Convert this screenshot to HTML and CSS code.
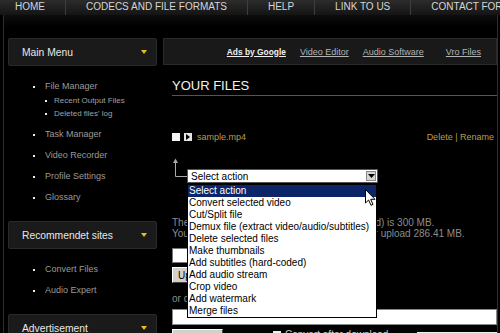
FILE: index.html
```html
<!DOCTYPE html>
<html>
<head>
<meta charset="utf-8">
<link rel="stylesheet" href="styles.css">
</head>
<body>
<div class="page">
  <nav class="topnav">
    <a class="nav-item first">Home</a>
    <a class="nav-item">Codecs and file formats</a>
    <a class="nav-item">Help</a>
    <a class="nav-item">Link to us</a>
    <a class="nav-item">Contact form</a>
  </nav>
  <div class="frame">
    <aside class="sidebar">
      <div class="side-box"><span>Main Menu</span><i class="tri"></i></div>
      <ul class="menu">
        <li>File Manager
          <ul class="sub">
            <li>Recent Output Files</li>
            <li>Deleted files' log</li>
          </ul>
        </li>
        <li>Task Manager</li>
        <li>Video Recorder</li>
        <li>Profile Settings</li>
        <li>Glossary</li>
      </ul>
      <div class="side-box"><span>Recommendet sites</span><i class="tri"></i></div>
      <ul class="menu">
        <li>Convert Files</li>
        <li>Audio Expert</li>
      </ul>
      <div class="side-box"><span>Advertisement</span><i class="tri"></i></div>
    </aside>
    <main class="main">
      <div class="adbar">
        <a class="ad ad-google">Ads by Google</a>
        <a class="ad">Video Editor</a>
        <a class="ad">Audio Software</a>
        <a class="ad ad-last">Vro Files</a>
      </div>
      <div class="content">
        <h1 class="title">YOUR FILES</h1>
        <div class="file-row">
          <span class="chk"></span>
          <span class="play"><svg width="6" height="6" viewBox="0 0 6 6"><path d="M1 0 L5 3 L1 6 Z" fill="#000"/></svg></span>
          <a class="fname">sample.mp4</a>
          <span class="file-actions">Delete | Rename</span>
        </div>
        <div class="actions">
          <svg class="arrow" width="15" height="19" viewBox="0 0 15 19">
            <path d="M3.5 3 V18.5 H15" fill="none" stroke="#aaa" stroke-width="1"/>
            <path d="M3.5 0.5 L1 5 H6 Z" fill="#aaa"/>
          </svg>
          <div class="select-wrap">
            <div class="select">
              <span>Select action</span>
              <span class="sel-btn"><svg width="7" height="4" viewBox="0 0 7 4"><path d="M0 0 H7 L3.5 4 Z" fill="#000"/></svg></span>
            </div>
            <ul class="dropdown">
              <li class="hl">Select action</li>
              <li>Convert selected video</li>
              <li>Cut/Split file</li>
              <li>Demux file (extract video/audio/subtitles)</li>
              <li>Delete selected files</li>
              <li>Make thumbnails</li>
              <li>Add subtitles (hard-coded)</li>
              <li>Add audio stream</li>
              <li>Crop video</li>
              <li>Add watermark</li>
              <li>Merge files</li>
            </ul>
            <svg class="cursor" width="11" height="17" viewBox="0 0 11 17">
              <path d="M0.5 0.5 V14 L3.6 11 L6 16.3 L8 15.4 L5.7 10.3 H10 Z" fill="#fff" stroke="#000" stroke-width="1" stroke-linejoin="round"/>
            </svg>
          </div>
        </div>
        <p class="info">The maximum size of all of your files (uploaded) is 300 MB.<br>You still have the space left in your account for upload 286.41 MB.</p>
        <div class="file-input"></div>
        <button class="btn">Upload</button>
        <p class="or">or download file from URL:</p>
        <div class="url-input"></div>
        <div class="bottom-row">
          <button class="btn">Download</button>
          <span class="chk2"></span>
          <span class="opt">Convert after download</span>
          <span class="small-input"></span>
        </div>
      </div>
    </main>
  </div>
</div>
</body>
</html>
```

FILE: styles.css
```css
html, body {
  margin: 0;
  padding: 0;
  background: #000;
  overflow: hidden;
  width: 500px;
  height: 333px;
}
.page {
  width: 500px;
  font-family: "Liberation Sans", Arial, sans-serif;
  color: #999;
}
.topnav {
  display: flex;
  height: 15px;
  background: linear-gradient(#2c2c2c, #141414);
  white-space: nowrap;
  overflow: hidden;
}
.nav-item {
  font-size: 10px;
  line-height: 14px;
  text-transform: uppercase;
  color: #d6d6d6;
  padding: 0 20px;
  border-left: 1px solid #3e3e3e;
}
.nav-item.first {
  padding-left: 15px;
  border-left: none;
}
.frame {
  margin-left: 3px;
  width: 489px;
  border-left: 1px solid #2e2e2e;
  border-right: 1px solid #2e2e2e;
  padding: 23px 0 0 4px;
  display: flex;
  gap: 6px;
  background: linear-gradient(#0d0d0d, #000 12px);
}
.sidebar {
  width: 149px;
  flex: none;
}
.side-box {
  height: 26px;
  background: #1a1a1a;
  border: 1px solid #2a2a2a;
  border-radius: 2px;
  display: flex;
  align-items: center;
  justify-content: space-between;
  padding: 0 9px 0 13px;
  font-size: 10.3px;
  color: #e8e8e8;
}
.tri {
  width: 0;
  height: 0;
  border-left: 3px solid transparent;
  border-right: 3px solid transparent;
  border-top: 4px solid #e6c01c;
}
.menu {
  list-style: none;
  margin: 0;
  padding: 10px 0 13px 37px;
}
.menu > li {
  position: relative;
  font-size: 9px;
  line-height: 21px;
  color: #9a9a9a;
}
.menu > li::before {
  content: "";
  position: absolute;
  left: -12px;
  top: 10px;
  width: 2px;
  height: 2px;
  background: #eee;
}
.sub {
  list-style: none;
  margin: -3px 0 4px 0;
  padding: 0 0 0 9px;
}
.sub li {
  position: relative;
  font-size: 8px;
  line-height: 13px;
  color: #a0a0a0;
}
.sub li::before {
  content: "";
  position: absolute;
  left: -9px;
  top: 6px;
  width: 2px;
  height: 2px;
  background: #eee;
}
.main {
  width: 334px;
  flex: none;
}
.adbar {
  height: 25px;
  background: #191919;
  border: 1px solid #2a2a2a;
  display: flex;
  align-items: center;
  justify-content: flex-end;
  padding-right: 15px;
}
.ad {
  font-size: 9px;
  color: #b4b4b4;
  text-decoration: underline;
  margin-left: 14px;
}
.ad-google {
  font-weight: bold;
  font-size: 8.4px;
  color: #f0f0f0;
}
.ad-last {
  margin-left: 22px;
}
.content {
  padding-left: 9px;
}
.title {
  margin: 13px 0 0 0;
  font-size: 13px;
  line-height: 15px;
  font-weight: normal;
  color: #f2f2f2;
  padding-bottom: 2px;
  border-bottom: 1px solid #555;
}
.file-row {
  margin-top: 36px;
  height: 10px;
  display: flex;
  align-items: center;
  padding-right: 3px;
}
.chk {
  width: 8px;
  height: 8px;
  background: #f4f4f4;
}
.play {
  width: 8px;
  height: 8px;
  margin-left: 4px;
  background: #e4e4e4;
  display: flex;
  align-items: center;
  justify-content: center;
}
.fname {
  margin-left: 5px;
  font-size: 9px;
  color: #b89e48;
}
.file-actions {
  margin-left: auto;
  font-size: 9px;
  color: #b89e48;
}
.actions {
  margin-top: 16px;
  display: flex;
  align-items: flex-start;
}
.arrow {
  display: block;
}
.select-wrap {
  position: relative;
  margin-top: 11px;
}
.select {
  width: 189px;
  height: 12px;
  border: 1px solid #555;
  background: #fff;
  display: flex;
  align-items: center;
  justify-content: space-between;
  font-size: 10px;
  color: #000;
}
.select span:first-child {
  padding-left: 3px;
}
.sel-btn {
  width: 10px;
  height: 10px;
  margin-right: 1px;
  background: #d8d5ce;
  border: 1px solid #888;
  box-sizing: border-box;
  display: flex;
  align-items: center;
  justify-content: center;
}
.dropdown {
  position: absolute;
  left: 0;
  top: 15px;
  width: 188px;
  margin: 0;
  padding: 0;
  list-style: none;
  background: #fff;
  border: 1px solid #000;
  z-index: 5;
}
.dropdown li {
  font-size: 10px;
  line-height: 12px;
  color: #000;
  padding-left: 1px;
  white-space: nowrap;
}
.dropdown li.hl {
  background: #0c2468;
  color: #fff;
}
.cursor {
  position: absolute;
  left: 178px;
  top: 20px;
  z-index: 6;
}
.info {
  margin: 34px 0 0 0;
  font-size: 10px;
  line-height: 11px;
  color: #8c8c8c;
  white-space: nowrap;
}
.file-input {
  margin-top: 9px;
  width: 120px;
  height: 13px;
  background: #fff;
  border: 1px solid #777;
}
.btn {
  display: block;
  margin-top: 4px;
  height: 16px;
  padding: 0 5px;
  font-family: "Liberation Sans", Arial, sans-serif;
  font-size: 10px;
  color: #000;
  background: #d4d0c8;
  border: 1px solid;
  border-color: #fff #404040 #404040 #fff;
}
.or {
  margin: 10px 0 0 0;
  font-size: 10px;
  line-height: 11px;
  color: #8c8c8c;
}
.url-input {
  margin-top: 5px;
  height: 14px;
  background: #fff;
  border: 1px solid #888;
}
.bottom-row {
  margin-top: 4px;
  display: flex;
  align-items: flex-start;
}
.bottom-row .btn {
  margin-top: 0;
  width: 51px;
}
.chk2 {
  margin: 2px 0 0 50px;
  width: 8px;
  height: 8px;
  background: #eee;
}
.opt {
  margin-left: 4px;
  font-size: 10px;
  color: #ccc;
}
.small-input {
  margin-left: auto;
  margin-top: 3px;
  width: 80px;
  height: 14px;
  background: #eee;
}
```
